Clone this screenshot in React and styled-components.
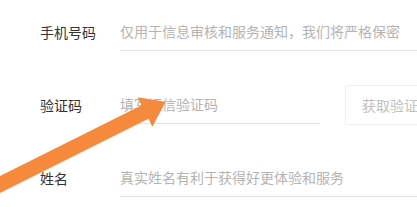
import React from "react";
import styled, {createGlobalStyle} from "styled-components";

const GlobalStyle = createGlobalStyle`
    html, body {
        margin: 0;
        padding: 0;
        background: #fff;
        overflow: hidden;
    }

    body {
        font-family: "Noto Sans CJK SC", "Noto Sans", sans-serif;
    }
`;

const StyledPage = styled.div`
    position: relative;
    width: 417px;
    height: 207px;
    padding-top: 12px;
    box-sizing: border-box;
    overflow: hidden;
`;

const Form = styled.div`
    display: flex;
    flex-direction: column;
    gap: 34px;
`;

const Row = styled.div`
    display: flex;
    align-items: center;
    height: 39px;
`;

const Label = styled.div`
    width: 80px;
    padding-left: 40px;
    flex-shrink: 0;
    font-size: 14px;
    color: #333;
`;

const Field = styled.div`
    display: flex;
    align-items: center;
    width: ${props => props.width}px;
    height: 38px;
    flex-shrink: 0;
    border-bottom: 1px solid #e4e4e4;
    font-size: 14px;
    color: #b4b4b4;
    white-space: nowrap;
`;

const CodeButton = styled.button`
    height: 40px;
    width: 110px;
    margin-left: 25px;
    flex-shrink: 0;
    padding: 0 0 0 16px;
    border: 1px solid #f0f0f0;
    border-radius: 2px;
    background: #fff;
    font-family: inherit;
    font-size: 14px;
    color: #c0c0c0;
    text-align: left;
    white-space: nowrap;
`;

const Arrow = styled.svg`
    position: absolute;
    left: 0;
    top: 0;
    pointer-events: none;
`;

export default function App() {
    return (
        <>
            <GlobalStyle/>
            <StyledPage>
                <Form>
                    <Row>
                        <Label>手机号码</Label>
                        <Field width={320}>仅用于信息审核和服务通知，我们将严格保密</Field>
                    </Row>
                    <Row>
                        <Label>验证码</Label>
                        <Field width={200}>填写短信验证码</Field>
                        <CodeButton type="button">获取验证码</CodeButton>
                    </Row>
                    <Row>
                        <Label>姓名</Label>
                        <Field width={320}>真实姓名有利于获得好更体验和服务</Field>
                    </Row>
                </Form>

                <Arrow width="417" height="207" viewBox="0 0 417 207">
                    <polygon
                        points="-23.4,187.8 141.6,105.3 137.6,97.2 165.6,101.7 152.4,126.8 148.4,118.7 -16.6,201.2"
                        fill="#f68a3c"
                        strokeLinejoin="round"
                    />
                </Arrow>
            </StyledPage>
        </>
    );
}
